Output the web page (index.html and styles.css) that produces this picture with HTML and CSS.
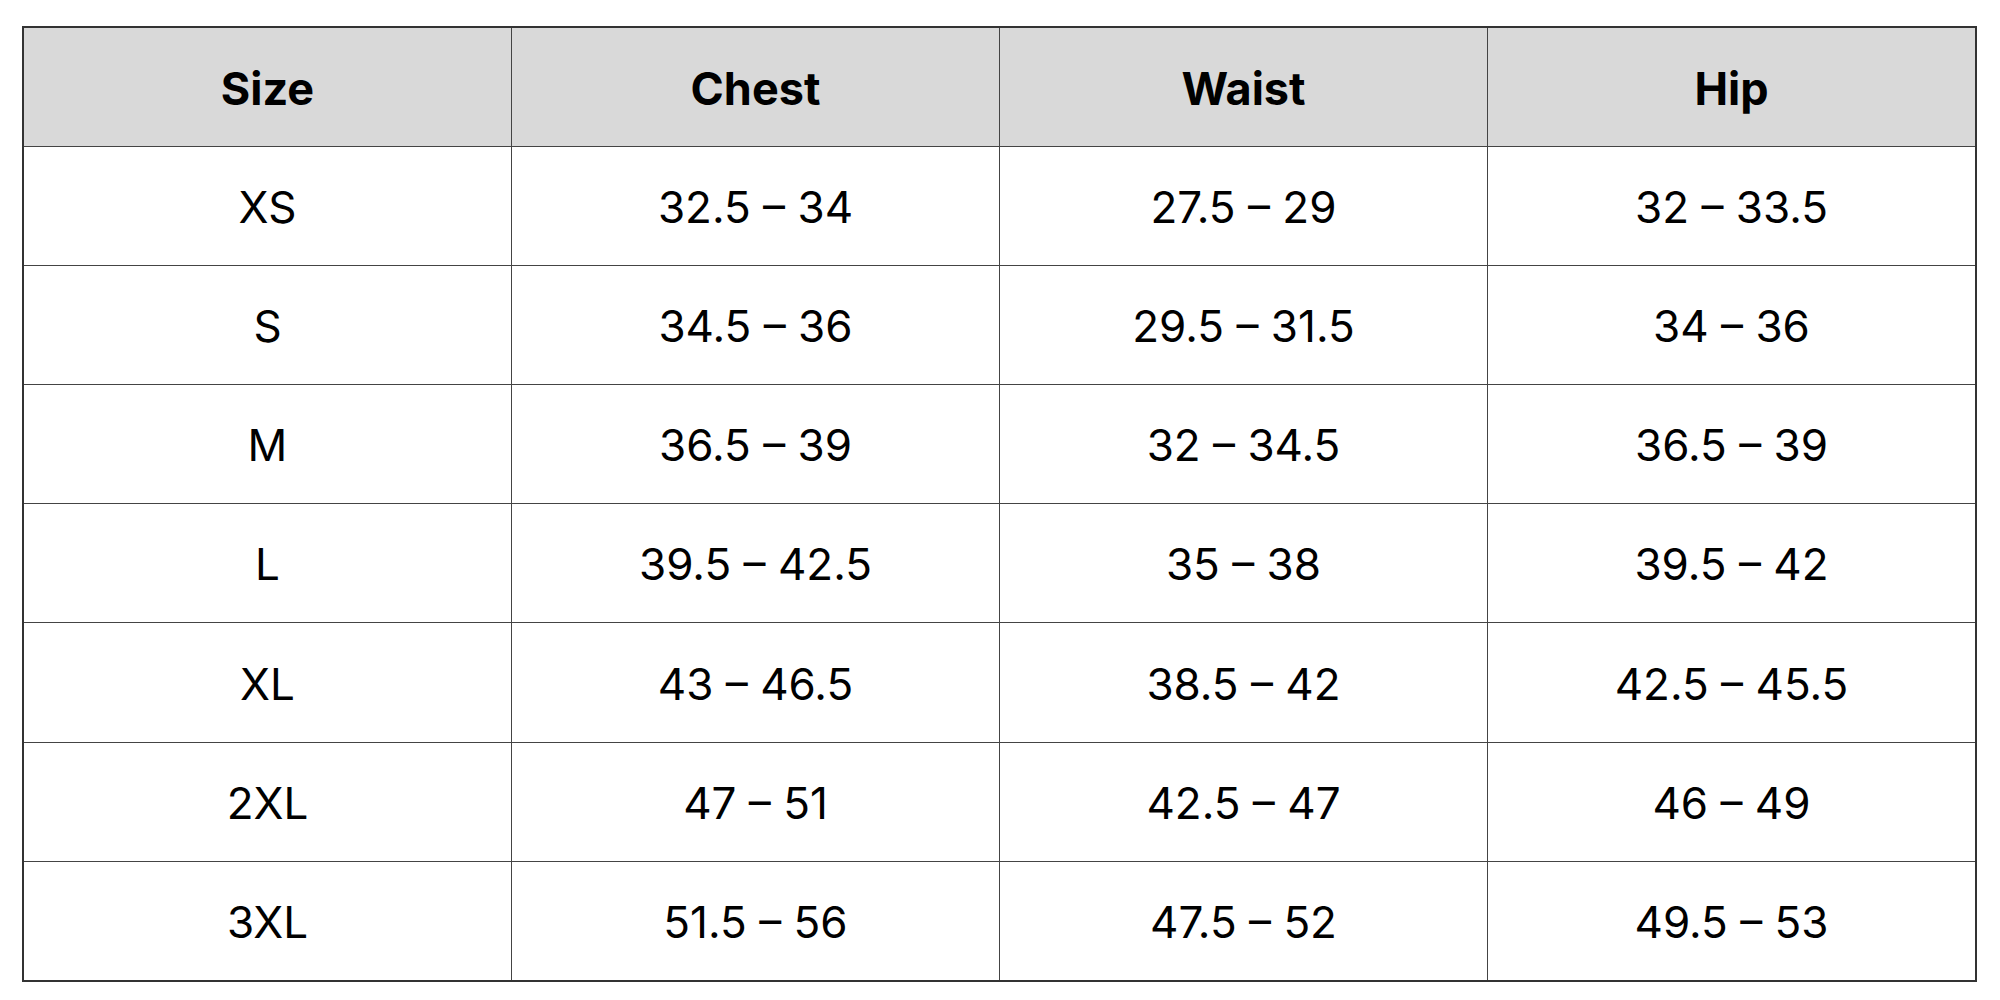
FILE: index.html
```html
<!DOCTYPE html>
<html lang="en">
<head>
<meta charset="utf-8">
<title>Size Chart</title>
<link rel="stylesheet" href="styles.css">
</head>
<body>
<table class="size-table">
  <thead>
    <tr><th>Size</th><th>Chest</th><th>Waist</th><th>Hip</th></tr>
  </thead>
  <tbody>
    <tr><td>XS</td><td>32.5 – 34</td><td>27.5 – 29</td><td>32 – 33.5</td></tr>
    <tr><td>S</td><td>34.5 – 36</td><td>29.5 – 31.5</td><td>34 – 36</td></tr>
    <tr><td>M</td><td>36.5 – 39</td><td>32 – 34.5</td><td>36.5 – 39</td></tr>
    <tr><td>L</td><td>39.5 – 42.5</td><td>35 – 38</td><td>39.5 – 42</td></tr>
    <tr><td>XL</td><td>43 – 46.5</td><td>38.5 – 42</td><td>42.5 – 45.5</td></tr>
    <tr><td>2XL</td><td>47 – 51</td><td>42.5 – 47</td><td>46 – 49</td></tr>
    <tr><td>3XL</td><td>51.5 – 56</td><td>47.5 – 52</td><td>49.5 – 53</td></tr>
  </tbody>
</table>
</body>
</html>
```

FILE: styles.css
```css
html, body {
  margin: 0;
  padding: 0;
  background: #ffffff;
}

body {
  padding: 26px 0 0 22px;
  font-family: Inter, "Open Sans", "Liberation Sans", sans-serif;
  color: #000000;
}

.size-table {
  border-collapse: collapse;
  width: 1955px;
  table-layout: fixed;
  border: 2px solid #333333;
}

.size-table th,
.size-table td {
  border: 1.5px solid #444444;
  height: 116.1px;
  padding: 2px 0 0 0;
  text-align: center;
  vertical-align: middle;
  width: 25%;
}

.size-table th {
  background: #d9d9d9;
  font-size: 45px;
  font-weight: 700;
}

.size-table td {
  font-size: 44px;
  font-weight: 400;
}
```
